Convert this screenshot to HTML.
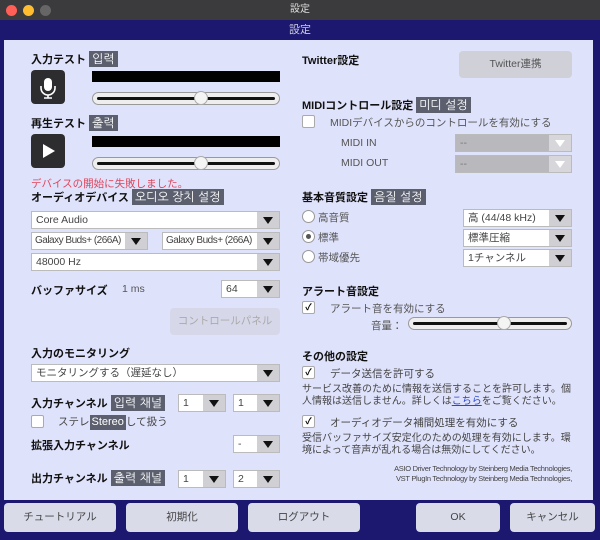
<!DOCTYPE html>
<html><head><meta charset="utf-8"><style>
*{box-sizing:border-box;margin:0;padding:0}
body{width:600px;height:540px;overflow:hidden;background:#1c1870;font-family:"Liberation Sans","Noto Sans CJK JP",sans-serif;font-size:10.5px;color:#333;position:relative}
.a{position:absolute;white-space:nowrap}
.tb{left:0;top:0;width:600px;height:20px;background:#3b3b3d;color:#ddd;text-align:center;line-height:20px;font-size:10px}
.dot{top:5px;width:11px;height:11px;border-radius:50%}
.hd{left:0;top:20px;width:600px;height:20px;background:#1c1870;color:#ccd;text-align:center;line-height:20px;font-size:11px}
.panel{left:4px;top:40px;width:589px;height:460px;background:#dfe2fb}
.h{font-weight:bold;font-size:11px;color:#111}
.tag{background:#5b5f6e;color:#fff;padding:0 3px;font-weight:normal;font-size:12px;line-height:16px;font-family:"Liberation Sans","NanumGothic","Noto Sans CJK KR",sans-serif;display:inline-block}
.bar{background:#000;height:11px}
.sl{height:13px;border:1px solid #999;border-radius:7px;background:#eee}
.sl:before{content:"";position:absolute;left:4px;right:4px;top:4px;height:3px;background:#111;border-radius:2px}
.th{width:14px;height:14px;border-radius:50%;background:#f4f4f4;border:1px solid #aaa}
.btn{background:#2d2d30;border-radius:4px}
.sel{background:#fff;border:1px solid #bbb;height:18px;line-height:16px;padding-left:4px;color:#444;overflow:hidden}
.sel:after{content:"";position:absolute;right:0;top:0;width:22px;height:16px;background:#cfcfd4}
.sel i{position:absolute;right:6px;top:5px;border-left:5px solid transparent;border-right:5px solid transparent;border-top:7px solid #111;z-index:1}
.sm{font-size:10px;letter-spacing:-0.5px;padding-left:3px}
.dis{background:#b9b9bd;color:#777}
.dis:after{background:#d7d7db}
.dis i{border-top-color:#fff}
.cb{width:13px;height:13px;background:#fff;border:1px solid #aaa;border-radius:2px;font-size:9px;line-height:11px;text-align:center;color:#000;font-weight:bold}
.rd{width:13px;height:13px;border-radius:50%;background:#fff;border:1px solid #999}
.gb{background:#cfd0d8;border-radius:4px;text-align:center;color:#555}
.fb{background:#d9dbe9;border-radius:4px;text-align:center;color:#444;line-height:29px;top:503px;height:29px;font-size:10.5px}
.p{color:#444;line-height:12px;white-space:normal;width:276px;font-size:10px}
</style></head><body>
<div class="a tb">設定</div>
<div class="a dot" style="left:6px;background:#fe5f57"></div>
<div class="a dot" style="left:23px;background:#febc2e"></div>
<div class="a dot" style="left:40px;background:#666"></div>
<div class="a hd">設定</div>
<div class="a panel"></div>

<div class="a h" style="left:31px;top:51px">入力テスト <span class="tag">입력</span></div>
<div class="a btn" style="left:31px;top:70px;width:34px;height:34px"><svg width="34" height="34"><rect x="13" y="8" width="8" height="13" rx="4" fill="#fff"/><path d="M10 16v2a7 7 0 0 0 14 0v-2" stroke="#fff" stroke-width="1.6" fill="none"/><path d="M17 25v3M13 28h8" stroke="#fff" stroke-width="1.6"/></svg></div>
<div class="a bar" style="left:92px;top:71px;width:188px"></div>
<div class="a sl" style="left:92px;top:92px;width:188px"></div>
<div class="a th" style="left:194px;top:91px"></div>
<div class="a h" style="left:31px;top:115px">再生テスト <span class="tag">출력</span></div>
<div class="a btn" style="left:31px;top:134px;width:34px;height:34px"><svg width="34" height="34"><path d="M12 10L24 17L12 24Z" fill="#fff"/></svg></div>
<div class="a bar" style="left:92px;top:136px;width:188px"></div>
<div class="a sl" style="left:92px;top:157px;width:188px"></div>
<div class="a th" style="left:194px;top:156px"></div>
<div class="a" style="left:31px;top:176px;color:#e0455a">デバイスの開始に失敗しました。</div>
<div class="a h" style="left:31px;top:189px">オーディオデバイス <span class="tag">오디오 장치 설정</span></div>
<div class="a sel" style="left:31px;top:211px;width:249px">Core Audio<i></i></div>
<div class="a sel sm" style="left:31px;top:232px;width:117px">Galaxy Buds+ (266A)<i></i></div>
<div class="a sel sm" style="left:162px;top:232px;width:118px">Galaxy Buds+ (266A)<i></i></div>
<div class="a sel" style="left:31px;top:253px;width:249px">48000 Hz<i></i></div>
<div class="a h" style="left:31px;top:282px">バッファサイズ</div>
<div class="a" style="left:122px;top:283px;color:#555">1 ms</div>
<div class="a sel" style="left:221px;top:280px;width:59px">64<i></i></div>
<div class="a gb" style="left:170px;top:308px;width:110px;height:27px;line-height:27px;color:#aaa;background:#d6d8ea">コントロールパネル</div>
<div class="a h" style="left:31px;top:345px">入力のモニタリング</div>
<div class="a sel" style="left:31px;top:364px;width:249px">モニタリングする（遅延なし）<i></i></div>
<div class="a h" style="left:31px;top:395px">入力チャンネル <span class="tag">입력 채널</span></div>
<div class="a sel" style="left:178px;top:394px;width:48px">1<i></i></div>
<div class="a sel" style="left:233px;top:394px;width:47px">1<i></i></div>
<div class="a cb" style="left:31px;top:415px"></div>
<div class="a" style="left:58px;top:414px;color:#444">ステレ<span class="tag" style="font-size:11px;line-height:15px;padding:0 2px">Stereo</span>して扱う</div>
<div class="a h" style="left:31px;top:437px">拡張入力チャンネル</div>
<div class="a sel" style="left:233px;top:435px;width:47px">-<i></i></div>
<div class="a h" style="left:31px;top:470px">出力チャンネル <span class="tag">출력 채널</span></div>
<div class="a sel" style="left:178px;top:470px;width:48px">1<i></i></div>
<div class="a sel" style="left:233px;top:470px;width:47px">2<i></i></div>

<div class="a h" style="left:302px;top:52px">Twitter設定</div>
<div class="a gb" style="left:459px;top:51px;width:113px;height:27px;line-height:27px">Twitter連携</div>
<div class="a h" style="left:302px;top:97px">MIDIコントロール設定 <span class="tag">미디 설정</span></div>
<div class="a cb" style="left:302px;top:115px"></div>
<div class="a" style="left:330px;top:115px;color:#555">MIDIデバイスからのコントロールを有効にする</div>
<div class="a" style="left:341px;top:137px;color:#555">MIDI IN</div>
<div class="a sel dis" style="left:455px;top:134px;width:117px">--<i></i></div>
<div class="a" style="left:341px;top:157px;color:#555">MIDI OUT</div>
<div class="a sel dis" style="left:455px;top:155px;width:117px">--<i></i></div>
<div class="a h" style="left:302px;top:189px">基本音質設定 <span class="tag">음질 설정</span></div>
<div class="a rd" style="left:302px;top:210px"></div><div class="a" style="left:318px;top:210px;color:#555">高音質</div>
<div class="a rd" style="left:302px;top:230px"></div><div class="a" style="left:306px;top:234px;width:5px;height:5px;border-radius:50%;background:#555"></div><div class="a" style="left:318px;top:230px;color:#555">標準</div>
<div class="a rd" style="left:302px;top:250px"></div><div class="a" style="left:318px;top:250px;color:#555">帯域優先</div>
<div class="a sel" style="left:463px;top:209px;width:109px">高 (44/48 kHz)<i></i></div>
<div class="a sel" style="left:463px;top:229px;width:109px">標準圧縮<i></i></div>
<div class="a sel" style="left:463px;top:249px;width:109px">1チャンネル<i></i></div>
<div class="a h" style="left:302px;top:283px">アラート音設定</div>
<div class="a cb" style="left:302px;top:301px">✓</div>
<div class="a" style="left:330px;top:301px;color:#555">アラート音を有効にする</div>
<div class="a" style="left:371px;top:318px;color:#555">音量：</div>
<div class="a sl" style="left:408px;top:317px;width:164px"></div>
<div class="a th" style="left:497px;top:316px"></div>
<div class="a h" style="left:302px;top:348px">その他の設定</div>
<div class="a cb" style="left:302px;top:366px">✓</div>
<div class="a" style="left:330px;top:366px;color:#444">データ送信を許可する</div>
<div class="a p" style="left:302px;top:384px">サービス改善のために情報を送信することを許可します。個人情報は送信しません。詳しくは<span style="color:#2b46c8;text-decoration:underline">こちら</span>をご覧ください。</div>
<div class="a cb" style="left:302px;top:415px">✓</div>
<div class="a" style="left:330px;top:415px;color:#444">オーディオデータ補間処理を有効にする</div>
<div class="a p" style="left:302px;top:433px">受信バッファサイズ安定化のための処理を有効にします。環境によって音声が乱れる場合は無効にしてください。</div>
<div class="a" style="right:28px;top:464px;font-size:7.5px;line-height:10px;text-align:right;color:#444;letter-spacing:-0.3px">ASIO Driver Technology by Steinberg Media Technologies,<br>VST PlugIn Technology by Steinberg Media Technologies,</div>

<div class="a fb" style="left:4px;width:112px">チュートリアル</div>
<div class="a fb" style="left:126px;width:112px">初期化</div>
<div class="a fb" style="left:248px;width:112px">ログアウト</div>
<div class="a fb" style="left:416px;width:84px">OK</div>
<div class="a fb" style="left:510px;width:85px">キャンセル</div>
</body></html>
